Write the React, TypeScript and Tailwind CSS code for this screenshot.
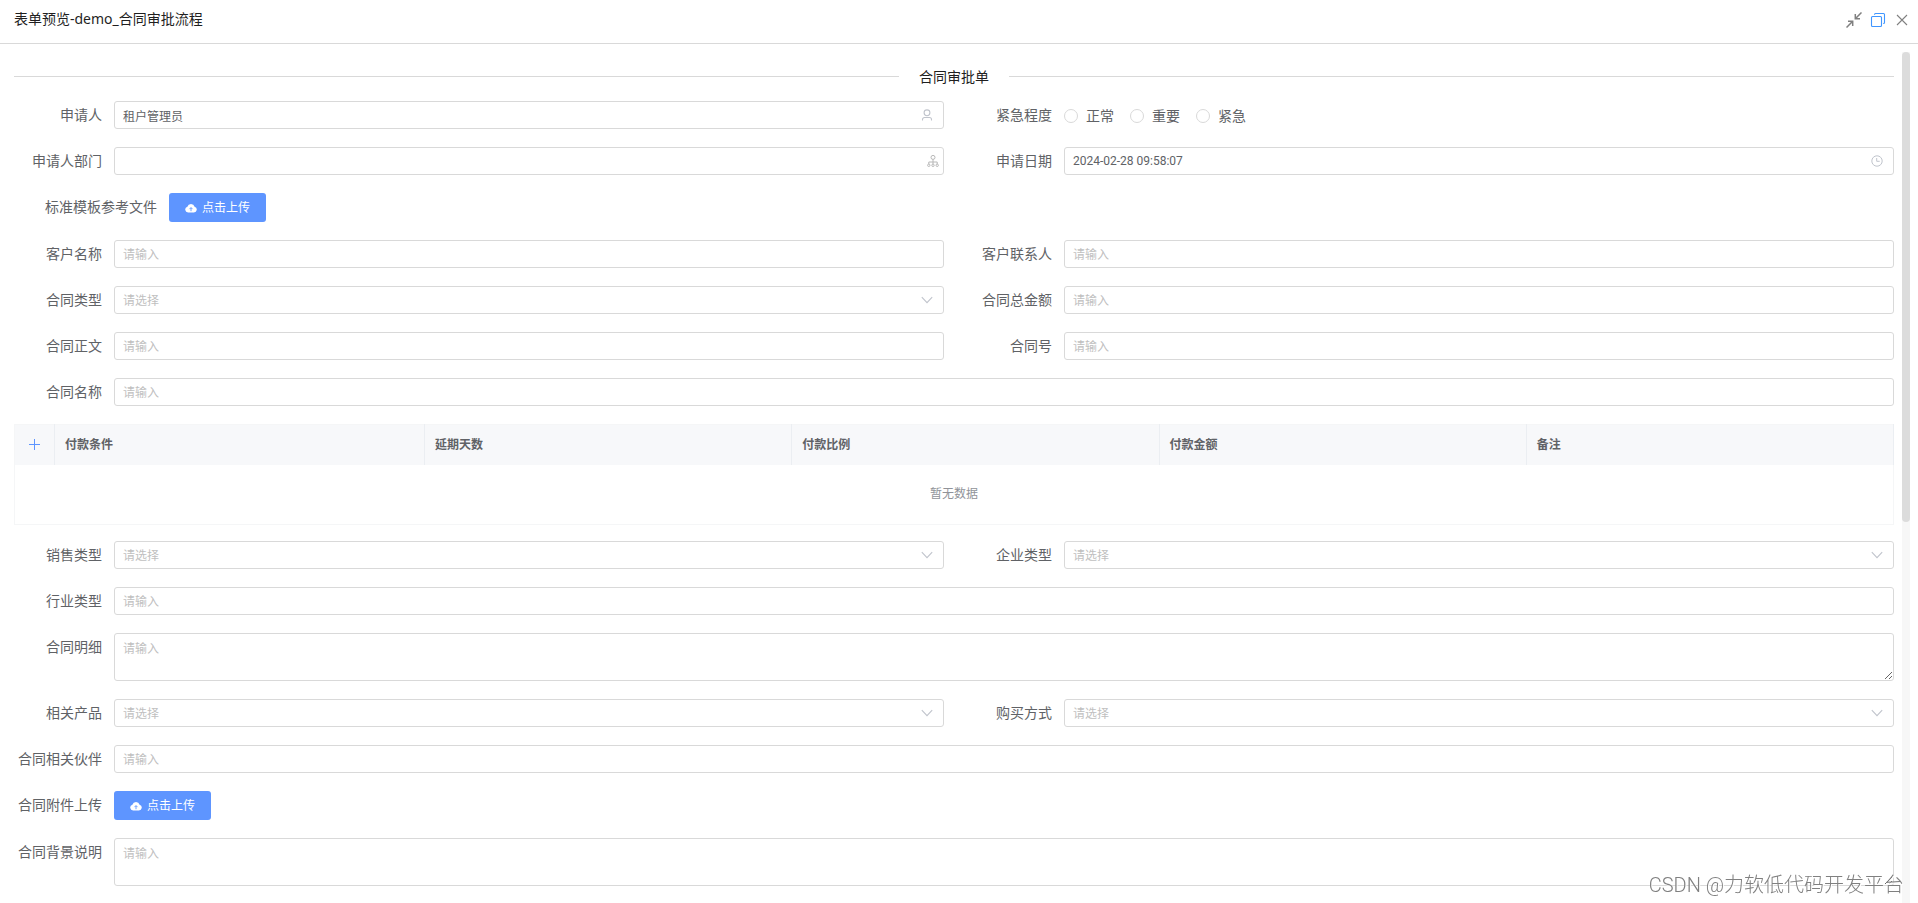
import React from 'react';

const INPUT =
  'block w-full h-7 px-2 rounded-[3px] border border-[#d9d9d9] bg-white text-xs text-[#606266] placeholder-[#bfbfbf] outline-none placeholder-shown:pt-[2px] focus:border-[#5e95ff]';

interface FieldProps {
  id: string;
  label: string;
}

interface FormItemProps extends FieldProps {
  wide?: boolean;
  children: React.ReactNode;
}

function FormItem({ id, label, wide, children }: FormItemProps) {
  return (
    <div className={wide ? 'col-span-2 flex items-start' : 'flex items-start'}>
      <label htmlFor={id} className="w-[100px] shrink-0 pr-3 text-right text-sm leading-7 whitespace-nowrap">
        {label}
      </label>
      <div className="min-w-0 flex-1">{children}</div>
    </div>
  );
}

function TextField({ id, label, wide }: FieldProps & { wide?: boolean }) {
  return (
    <FormItem id={id} label={label} wide={wide}>
      <input id={id} type="text" placeholder="请输入" className={INPUT} />
    </FormItem>
  );
}

function SelectField({ id, label }: FieldProps) {
  return (
    <FormItem id={id} label={label}>
      <div className="relative">
        <select id={id} defaultValue="" className={`${INPUT} appearance-none pt-[2px] text-[#bfbfbf]!`}>
          <option value="">请选择</option>
        </select>
        <svg className="pointer-events-none absolute top-2 right-[11px] h-3 w-3" viewBox="0 0 12 12" fill="none" stroke="#c0c4cc" strokeWidth="1.1">
          <path d="M.8 3.2 6 8.6l5.2-5.4" />
        </svg>
      </div>
    </FormItem>
  );
}

function TextAreaField({ id, label }: FieldProps) {
  return (
    <FormItem id={id} label={label} wide>
      <textarea
        id={id}
        placeholder="请输入"
        className="block h-12 w-full resize-y rounded-[3px] border border-[#d9d9d9] bg-white px-2 py-[6px] text-xs leading-[18px] text-[#606266] placeholder-[#bfbfbf] outline-none focus:border-[#5e95ff]"
      />
    </FormItem>
  );
}

function UploadButton({ id }: { id: string }) {
  return (
    <button
      id={id}
      type="button"
      className="flex h-[29px] items-center gap-[5px] rounded-[3px] bg-[#5e95ff] px-4 text-xs text-white"
    >
      <svg className="h-3 w-3" viewBox="0 0 12 12">
        <path fill="#fff" d="M3.2 10.4A2.9 2.9 0 0 1 2.4 4.7a3.75 3.75 0 0 1 7.2 0 2.9 2.9 0 0 1-.8 5.7z" />
        <path fill="none" stroke="#5e95ff" strokeWidth=".9" d="M6 9.2V5.8M4.5 7.1 6 5.6l1.5 1.5" />
      </svg>
      点击上传
    </button>
  );
}

const ROW = 'mb-[18px] grid grid-cols-2 gap-x-5 gap-y-[18px]';
const COLUMNS = ['付款条件', '延期天数', '付款比例', '付款金额', '备注'];
const URGENCY = ['正常', '重要', '紧急'];

function Header() {
  return (
    <header className="flex h-11 shrink-0 items-center justify-between border-b border-[#d9d9d9] pr-2 pl-[14px]">
      <h1 className="pb-[5px] font-['Noto_Sans','Noto_Sans_CJK_SC',sans-serif] text-sm text-[#1f1f1f]">
        表单预览-demo_合同审批流程
      </h1>
      <div className="flex items-center gap-2 pb-[3px]">
        <button type="button" aria-label="缩小">
          <svg className="h-4 w-4" viewBox="0 0 16 16" fill="none" stroke="#808080" strokeWidth="1.5">
            <path d="M15.5.5 9.3 6.7M9.3 2v4.7H14M.5 15.5l6.2-6.2M2 9.3h4.7V14" />
          </svg>
        </button>
        <button type="button" aria-label="还原">
          <svg className="h-4 w-4" viewBox="0 0 16 16" fill="none" stroke="#4096ff" strokeWidth="1.1">
            <rect x="1.5" y="4.5" width="10" height="10" rx="1" />
            <path d="M4.5 2.8v-.3a1 1 0 0 1 1-1h8a1 1 0 0 1 1 1v8a1 1 0 0 1-1 1h-.3" />
          </svg>
        </button>
        <button type="button" aria-label="关闭">
          <svg className="h-4 w-4" viewBox="0 0 16 16" fill="none" stroke="#808080" strokeWidth="1.1">
            <path d="m3 3 10 10M13 3 3 13" />
          </svg>
        </button>
      </div>
    </header>
  );
}

function PaymentTable() {
  return (
    <table className="mb-4 w-full table-fixed border-collapse border border-[#f5f6f7] text-xs">
      <thead className="bg-[#f7f8fa]">
        <tr className="h-10">
          <th className="w-10 border-r border-[#ebeef2]">
            <button type="button" aria-label="添加" className="block w-full">
              <svg className="mx-auto h-3 w-3" viewBox="0 0 12 12" stroke="#5e95ff">
                <path d="M0 5.5h11M5.5 0v11" />
              </svg>
            </button>
          </th>
          {COLUMNS.map((name, i) => (
            <th
              key={name}
              className={`${i === 0 ? 'w-[370px] ' : ''}border-r border-[#ebeef2] px-[10px] text-left font-bold`}
            >
              {name}
            </th>
          ))}
        </tr>
      </thead>
      <tbody>
        <tr className="h-[60px]">
          <td colSpan={6} className="text-center text-[#909399]">
            暂无数据
          </td>
        </tr>
      </tbody>
    </table>
  );
}

export default function App() {
  return (
    <div className="flex h-screen flex-col overflow-hidden bg-white font-['Roboto','Noto_Sans_CJK_SC',sans-serif] text-[#606266]">
      <Header />
      <div className="flex min-h-0 flex-1 gap-2 pr-2 pl-[14px]">
        <form className="min-w-0 flex-1 overflow-hidden pt-[22px]">
          <div className="mb-[14px] flex h-[21px] items-center gap-5">
            <div className="h-px flex-1 bg-[#d9d9d9]" />
            <h2 className="text-sm text-[#1f1f1f]">合同审批单</h2>
            <div className="h-px flex-1 bg-[#d9d9d9]" />
          </div>

          <div className={ROW}>
            <FormItem id="applicant" label="申请人">
              <div className="relative">
                <input id="applicant" type="text" defaultValue="租户管理员" className={INPUT} />
                <svg className="pointer-events-none absolute top-2 right-[11px] h-3 w-3" viewBox="0 0 12 12" fill="none" stroke="#c0c4cc" strokeWidth="1.1">
                  <circle cx="6" cy="3.8" r="2.9" />
                  <path d="M1.5 11.5v-1a2 2 0 0 1 2-2h5a2 2 0 0 1 2 2v1" />
                </svg>
              </div>
            </FormItem>
            <fieldset className="flex items-start">
              <legend className="float-left w-[100px] pr-3 text-right text-sm leading-7">紧急程度</legend>
              <div className="flex h-7 items-center gap-4 pt-[2px]">
                {URGENCY.map((name) => (
                  <label key={name} className="flex items-center gap-2 text-sm">
                    <input
                      type="radio"
                      name="urgency"
                      value={name}
                      className="h-[14px] w-[14px] appearance-none rounded-full border border-[#d9d9d9] bg-white checked:border-4 checked:border-[#5e95ff]"
                    />
                    {name}
                  </label>
                ))}
              </div>
            </fieldset>
            <FormItem id="department" label="申请人部门">
              <div className="relative">
                <input id="department" type="text" className={INPUT} />
                <svg className="pointer-events-none absolute top-2 right-[5px] h-3 w-3" viewBox="0 0 12 12" fill="none" stroke="#b8b8b8" strokeWidth="1">
                  <circle cx="6" cy="2.4" r="2" />
                  <circle cx="1.8" cy="10.3" r="1.2" />
                  <circle cx="6" cy="10.3" r="1.2" />
                  <circle cx="10.2" cy="10.3" r="1.2" />
                  <path d="M6 4.4v4.7M1.8 9.1V7h8.4v2.1" />
                </svg>
              </div>
            </FormItem>
            <FormItem id="date" label="申请日期">
              <div className="relative">
                <input id="date" type="text" defaultValue="2024-02-28 09:58:07" className={INPUT} />
                <svg className="pointer-events-none absolute top-2 right-[11px] h-3 w-3" viewBox="0 0 12 12" fill="none" stroke="#c0c4cc" strokeWidth="1">
                  <circle cx="6" cy="6" r="5.2" />
                  <path d="M5.7 3v3.3h3" />
                </svg>
              </div>
            </FormItem>
          </div>

          <div className="mb-[18px] flex items-start">
            <label htmlFor="template" className="w-[155px] pr-3 text-right text-sm leading-7">
              标准模板参考文件
            </label>
            <UploadButton id="template" />
          </div>

          <div className={ROW}>
            <TextField id="customer" label="客户名称" />
            <TextField id="contact" label="客户联系人" />
            <SelectField id="contract-type" label="合同类型" />
            <TextField id="amount" label="合同总金额" />
            <TextField id="body" label="合同正文" />
            <TextField id="number" label="合同号" />
            <TextField id="contract-name" label="合同名称" wide />
          </div>

          <PaymentTable />

          <div className={ROW}>
            <SelectField id="sales-type" label="销售类型" />
            <SelectField id="company-type" label="企业类型" />
            <TextField id="industry" label="行业类型" wide />
            <TextAreaField id="detail" label="合同明细" />
            <SelectField id="product" label="相关产品" />
            <SelectField id="purchase" label="购买方式" />
            <TextField id="partner" label="合同相关伙伴" wide />
            <FormItem id="attachment" label="合同附件上传" wide>
              <UploadButton id="attachment" />
            </FormItem>
            <TextAreaField id="background" label="合同背景说明" />
          </div>
        </form>
        <div className="mt-2 w-2 shrink-0 bg-[#f7f7f7]">
          <div className="h-[55.2%] rounded-full bg-[#dcdcdc]" />
        </div>
      </div>
      <div className="pointer-events-none fixed right-[14px] bottom-[2px] text-xl leading-8 font-light text-[#808080] [text-shadow:1px_1px_0_#fff]">
        CSDN @力软低代码开发平台
      </div>
    </div>
  );
}
